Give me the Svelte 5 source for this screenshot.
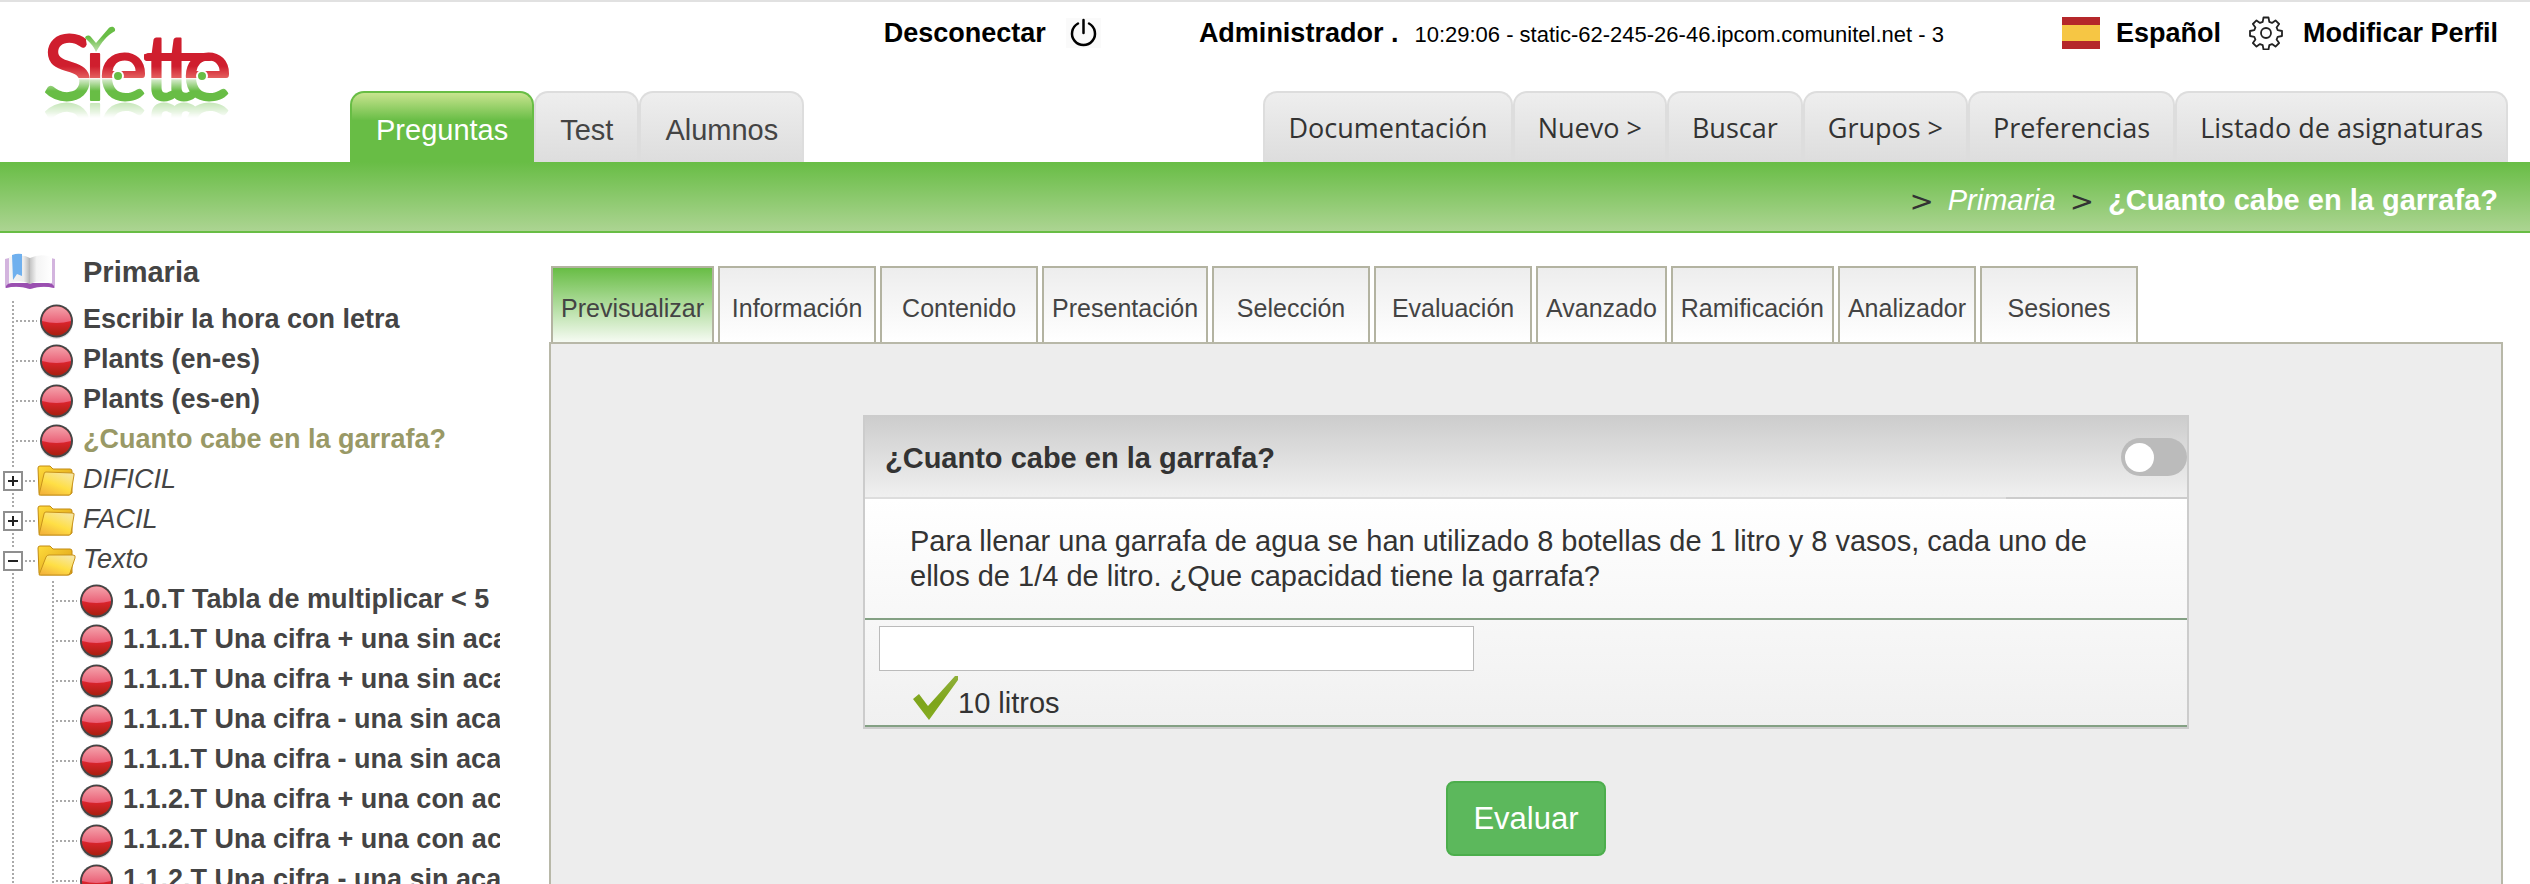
<script>
	const sections = [
		{ name: 'Preguntas', active: true },
		{ name: 'Test', active: false },
		{ name: 'Alumnos', active: false }
	];

	const tools = [
		'Documentación',
		'Nuevo >',
		'Buscar',
		'Grupos >',
		'Preferencias',
		'Listado de asignaturas'
	];

	const views = [
		'Previsualizar',
		'Información',
		'Contenido',
		'Presentación',
		'Selección',
		'Evaluación',
		'Avanzado',
		'Ramificación',
		'Analizador',
		'Sesiones'
	];

	// rows of the tree; folders carry an items list
	let tree = $state([
		{ name: 'Escribir la hora con letra' },
		{ name: 'Plants (en-es)' },
		{ name: 'Plants (es-en)' },
		{ name: '¿Cuanto cabe en la garrafa?', current: true },
		{ name: 'DIFICIL', open: false, items: [] },
		{ name: 'FACIL', open: false, items: [] },
		{
			name: 'Texto',
			open: true,
			items: [
				{ name: '1.0.T Tabla de multiplicar < 5' },
				{ name: '1.1.1.T Una cifra + una sin aca' },
				{ name: '1.1.1.T Una cifra + una sin aca' },
				{ name: '1.1.1.T Una cifra - una sin aca' },
				{ name: '1.1.1.T Una cifra - una sin aca' },
				{ name: '1.1.2.T Una cifra + una con ac' },
				{ name: '1.1.2.T Una cifra + una con ac' },
				{ name: '1.1.2.T Una cifra - una sin aca' }
			]
		}
	]);

	let view = $state('Previsualizar');
	let answer = $state('');
	let showAnswer = $state(false);
</script>

{#snippet ball()}
	<svg class="ball" width="37" height="38" viewBox="0 0 37 38" aria-hidden="true">
		<ellipse cx="18" cy="22" rx="16" ry="15" fill="#000" opacity="0.12" />
		<circle cx="18" cy="19" r="16.500" fill="#454545" />
		<circle cx="18" cy="19" r="14.500" fill="url(#ballLow)" />
		<path d="M3.500 19a14.500 14.500 0 0 1 29 0q-14.500 4-29 0z" fill="url(#ballTop)" />
	</svg>
{/snippet}

{#snippet leaf(item)}
	<li>
		<div class="row">
			<span class="dots"></span>
			{@render ball()}
			<a href="#item" class="question" class:current={item.current}>{item.name}</a>
		</div>
	</li>
{/snippet}

<svg class="defs" width="0" height="0" aria-hidden="true">
	<defs>
		<linearGradient id="ballTop" x1="0" y1="0" x2="0" y2="1">
			<stop offset="0" stop-color="#f4a3ab" />
			<stop offset="1" stop-color="#ea5f76" />
		</linearGradient>
		<linearGradient id="ballLow" x1="0" y1="0" x2="0" y2="1">
			<stop offset="0.5" stop-color="#e0242f" />
			<stop offset="1" stop-color="#a8200f" />
		</linearGradient>
		<linearGradient id="folderBack" x1="0" y1="0" x2="1" y2="1">
			<stop offset="0" stop-color="#ffdc3c" />
			<stop offset="1" stop-color="#d99a12" />
		</linearGradient>
		<linearGradient id="folderFront" x1="0.2" y1="1" x2="0.8" y2="0">
			<stop offset="0" stop-color="#f3b43c" />
			<stop offset="0.45" stop-color="#ffdf45" />
			<stop offset="1" stop-color="#f6e7a8" />
		</linearGradient>
		<linearGradient id="pageLeft">
			<stop offset="0" stop-color="#f6f6f6" />
			<stop offset="0.7" stop-color="#ececec" />
			<stop offset="1" stop-color="#b4b4b4" />
		</linearGradient>
		<linearGradient id="pageRight">
			<stop offset="0" stop-color="#c4c4c4" />
			<stop offset="0.3" stop-color="#f4f4f4" />
			<stop offset="1" stop-color="#fff" />
		</linearGradient>
	</defs>
</svg>

<div class="page">
	<header>
		<a href="#home" class="logo" aria-label="Siette">
			<svg width="210" height="90" viewBox="0 0 210 90">
				<defs>
					<linearGradient id="ink" gradientUnits="userSpaceOnUse" x1="0" y1="23" x2="0" y2="88">
						<stop offset="0" stop-color="#cf1e2e" />
						<stop offset="0.48" stop-color="#cf1e2e" />
						<stop offset="0.66" stop-color="#e4605f" />
						<stop offset="0.67" stop-color="#fff" />
						<stop offset="0.69" stop-color="#d3e9c8" />
						<stop offset="0.86" stop-color="#68bd45" />
						<stop offset="1" stop-color="#68bd45" />
					</linearGradient>
					<linearGradient id="tick" x1="0" y1="0" x2="0" y2="1">
						<stop offset="0.4" stop-color="#68bd45" />
						<stop offset="1" stop-color="#c3e2b2" />
					</linearGradient>
				</defs>
				<text x="9 50 65 109 129 149" y="88" class="wordmark">Siette</text>
				<ellipse cx="61" cy="28" rx="9" ry="11" fill="#fff" />
				<path d="M115 45h60" stroke="#cf1e2e" stroke-width="8" stroke-linecap="round" />
				<path
					d="M51 26c1-3 4-3 6-1l5 6 12-14c3-4 8-2 7 2-9 5-13 11-19 21-3-7-6-9-11-14z"
					fill="url(#tick)"
				/>
				<circle cx="84" cy="64" r="5" fill="#68bd45" stroke="#fff" stroke-width="2" />
				<circle cx="168" cy="64" r="5" fill="#68bd45" stroke="#fff" stroke-width="2" />
			</svg>
		</a>

		<div class="session">
			<a href="#logout" class="logout">
				Desconectar
				<svg width="35" height="30" viewBox="0 0 35 30" aria-hidden="true">
					<path
						d="M17.500 2v13M12 5.500a11.500 11.500 0 1 0 11 0"
						fill="none"
						stroke="#000"
						stroke-width="2.500"
						stroke-linecap="round"
					/>
				</svg>
			</a>
			<div class="user">
				<strong>Administrador .</strong>
				<span class="host">10:29:06 - static-62-245-26-46.ipcom.comunitel.net - 3</span>
			</div>
			<a href="#language" class="language">
				<span class="flag"></span>
				Español
			</a>
			<a href="#profile" class="profile">
				<svg width="34" height="34" viewBox="0 0 34 34" aria-hidden="true">
					<g fill="none" stroke="#222" stroke-width="1.800" stroke-linejoin="round">
						<path
							d="M14.500 1.500h5l.8 4.300 2.700 1.100 3.500-2.500 3.600 3.600-2.500 3.500 1.100 2.700 4.300.8v5l-4.300.8-1.100 2.700 2.500 3.500-3.600 3.600-3.500-2.500-2.700 1.100-.8 4.300h-5l-.8-4.300-2.700-1.100-3.500 2.500-3.600-3.600 2.500-3.500-1.100-2.700-4.300-.8v-5l4.300-.8 1.100-2.700-2.500-3.500 3.600-3.600 3.500 2.500 2.700-1.100z"
						/>
						<circle cx="17" cy="17" r="5" />
					</g>
				</svg>
				Modificar Perfil
			</a>
		</div>

		<div class="menus">
			<nav class="menu sections">
				{#each sections as section}
					<a href="#section" class:active={section.active}>{section.name}</a>
				{/each}
			</nav>
			<nav class="menu tools">
				{#each tools as tool}
					<a href="#tool">{tool}</a>
				{/each}
			</nav>
		</div>
	</header>

	<nav class="breadcrumb">
		<span class="sep">&gt;</span>
		<a href="#subject"><em>Primaria</em></a>
		<span class="sep">&gt;</span>
		<strong>¿Cuanto cabe en la garrafa?</strong>
	</nav>

	<div class="content">
		<aside>
			<a href="#subject" class="subject">
				<svg width="54" height="38" viewBox="0 0 54 38" aria-hidden="true">
					<path d="M2 6l4-1v27h42V5l4 1v29q-12-3-25 1-13-4-25-1z" fill="#d3b4de" />
					<path d="M3 33q2-3 6-3h36q4 0 6 3v2q-12-3-24 1-12-4-24-1z" fill="#9a4fb0" />
					<path d="M6 4q13-4 21 1v26q-9-5-21-1z" fill="url(#pageLeft)" />
					<path d="M27 5q10-5 22-1v26q-13-4-22 1z" fill="url(#pageRight)" />
					<path d="M9 2q5-2 10-1v22l-5-2-4 6z" fill="#6fb0ee" />
				</svg>
				Primaria
			</a>
			<ul class="tree">
				{#each tree as item}
					{#if item.items}
						<li>
							<div class="row">
								<button
									class="expand"
									aria-label={item.name}
									aria-expanded={item.open}
									onclick={() => (item.open = !item.open)}
								>
									<svg width="20" height="20" viewBox="0 0 20 20" aria-hidden="true">
										<rect x="1" y="1" width="18" height="18" fill="#fff" stroke="#8f8f8f" stroke-width="2" />
										<path d={item.open ? 'M5 10h10' : 'M5 10h10M10 5v10'} stroke="#222" stroke-width="2" />
									</svg>
								</button>
								<span class="dots short"></span>
								<svg class="folder" width="40" height="32" viewBox="0 0 40 32" aria-hidden="true">
									<path d="M1 3q0-2 2-2h10l3 3h17q2 0 2 2v22l-3 2H4q-2 0-2-2z" fill="url(#folderBack)" stroke="#c28a10" />
									{#if item.open}
										<path d="M9 12q1-2 3-2h24q3 0 2 3l-5 15q-1 2-3 2H2z" fill="url(#folderFront)" stroke="#c9941c" />
									{:else}
										<path d="M7 9q0-2 2-2l26 1q3 0 2 2l-3 18q0 2-2 2H2z" fill="url(#folderFront)" stroke="#c9941c" />
									{/if}
								</svg>
								<a href="#folder" class="theme">{item.name}</a>
							</div>
							{#if item.open}
								<ul class="branch">
									{#each item.items as child}
										{@render leaf(child)}
									{/each}
								</ul>
							{/if}
						</li>
					{:else}
						{@render leaf(item)}
					{/if}
				{/each}
			</ul>
		</aside>

		<main>
			<div class="views">
				{#each views as name}
					<button class:selected={name === view} onclick={() => (view = name)}>{name}</button>
				{/each}
			</div>

			<div class="panel">
				<form onsubmit={(e) => e.preventDefault()}>
					<section class="card">
						<div class="card-head">
							<h1>¿Cuanto cabe en la garrafa?</h1>
							<input
								type="checkbox"
								class="switch"
								aria-label="Mostrar solución"
								bind:checked={showAnswer}
							/>
						</div>
						<div class="rule"><span></span></div>
						<div class="card-body">
							<p class="stem" id="stem">
								Para llenar una garrafa de agua se han utilizado 8 botellas de 1 litro y 8 vasos, cada
								uno de ellos de 1/4 de litro. ¿Que capacidad tiene la garrafa?
							</p>
							<div class="answer">
								<input type="text" aria-labelledby="stem" bind:value={answer} />
								<div class="solution">
									<svg width="46" height="44" viewBox="0 0 46 44" aria-hidden="true">
										<defs>
											<linearGradient id="check" x1="0" y1="0" x2="0" y2="1">
												<stop offset="0" stop-color="#8fb03a" />
												<stop offset="0.6" stop-color="#7ea51a" />
												<stop offset="1" stop-color="#86ad22" />
											</linearGradient>
										</defs>
										<path d="M1 23l6-5 9 12L43 0h3v4L17 44z" fill="url(#check)" />
									</svg>
									10 litros
								</div>
							</div>
						</div>
					</section>
					<button type="submit" class="submit">Evaluar</button>
				</form>
			</div>
		</main>
	</div>
</div>

<style>
	:global(body) {
		margin: 0;
	}

	.page {
		display: flex;
		flex-direction: column;
		height: 100vh;
		overflow: hidden;
		background: #fff;
		color: #444;
		font-family: Helvetica, 'Liberation Sans', Arial, sans-serif;
		font-size: 27px;
	}

	a {
		color: inherit;
		text-decoration: none;
	}

	button,
	input {
		font-family: inherit;
	}

	.defs {
		position: absolute;
	}

	/* header */

	header {
		display: grid;
		grid-template-columns: 350px 1fr;
		grid-template-rows: 89px 71px;
		border-top: 2px solid #e1e1e1;
		flex: none;
	}

	.logo {
		grid-row: 1 / 3;
		padding: 10px 0 0 34px;
	}

	.logo svg {
		display: block;
		overflow: visible;
		-webkit-box-reflect: below 0 linear-gradient(transparent 82%, rgba(0, 0, 0, 0.4));
	}

	.wordmark {
		font-family: Lato, sans-serif;
		font-size: 92px;
		fill: url(#ink);
		stroke: url(#ink);
		stroke-width: 2px;
		stroke-linejoin: round;
	}

	.session {
		display: flex;
		justify-content: flex-end;
		align-items: center;
		height: 62px;
		padding-right: 32px;
		color: #000;
		font-weight: 700;
		white-space: nowrap;
	}

	.session a,
	.user {
		display: flex;
		align-items: center;
		gap: 20px;
	}

	.session .language,
	.user {
		gap: 16px;
	}

	.logout svg {
		background: #fafafa;
	}

	.user {
		align-items: baseline;
		margin: 0 118px 0 98px;
	}

	.host {
		font-size: 22px;
		font-weight: 400;
	}

	.flag {
		width: 38px;
		height: 32px;
		background: linear-gradient(#b5272a 25%, #f6c644 25% 75%, #b5272a 75%);
	}

	.profile {
		margin-left: 28px;
	}

	.menus {
		display: flex;
		justify-content: space-between;
		padding-right: 22px;
	}

	.menu {
		display: flex;
	}

	.menu a {
		display: flex;
		align-items: center;
		box-sizing: border-box;
		padding: 6px 24px 0;
		border: 2px solid #ddd;
		border-bottom: 0;
		border-radius: 14px 14px 0 0;
		background: linear-gradient(#eee, #ddd);
		font-size: 29px;
		white-space: nowrap;
	}

	.menu a.active {
		border-color: #68bd45;
		background: linear-gradient(#c8e48f, #68bd45 40%);
		color: #fff;
	}

	.menu.tools a {
		padding: 0 23px;
		color: #333;
		font-family: 'Trebuchet MS', 'Open Sans', sans-serif;
		font-size: 27px;
	}

	.breadcrumb {
		display: flex;
		justify-content: flex-end;
		align-items: center;
		gap: 14px;
		flex: none;
		box-sizing: border-box;
		height: 71px;
		padding: 8px 32px 0 0;
		border-bottom: 2px solid #68bd45;
		background: linear-gradient(#68bd45, #acd492);
		color: #fff;
		font-size: 29px;
	}

	.sep {
		color: #333;
		font-family: 'DejaVu Sans', sans-serif;
	}

	/* tree */

	.content {
		display: flex;
		flex: 1;
		min-height: 0;
	}

	aside {
		flex: none;
		width: 500px;
		overflow: hidden;
		font-weight: 700;
	}

	.subject {
		display: flex;
		align-items: center;
		gap: 26px;
		height: 68px;
		padding: 10px 0 0 3px;
		box-sizing: border-box;
		font-size: 29px;
	}

	.subject svg {
		flex: none;
	}

	ul {
		margin: 0;
		padding: 0;
		list-style: none;
		background: repeating-linear-gradient(#aaa 0 2px, transparent 2px 4px) 12px 0 / 2px 100% no-repeat;
	}

	.tree {
		min-height: 100%;
	}

	.branch {
		margin-left: 40px;
	}

	.row {
		display: flex;
		align-items: center;
		height: 40px;
		white-space: nowrap;
	}

	.dots {
		flex: none;
		width: 21px;
		height: 2px;
		margin-left: 16px;
		background: repeating-linear-gradient(90deg, #aaa 0 2px, transparent 2px 4px);
	}

	.dots.short {
		width: 12px;
		margin-left: 2px;
	}

	.expand {
		display: flex;
		margin-left: 1px;
		padding: 2px 0 2px 2px;
		border: 0;
		background: #fff;
		cursor: pointer;
	}

	.ball,
	.folder {
		flex: none;
		width: 40px;
		margin-right: 6px;
	}

	.row a {
		padding-bottom: 4px;
	}

	.theme {
		font-style: italic;
		font-weight: 400;
	}

	.current {
		color: #999966;
	}

	/* main */

	main {
		display: flex;
		flex-direction: column;
		flex: 1;
		margin: 33px 27px 0 49px;
	}

	.views {
		display: flex;
		gap: 4px;
		padding-left: 2px;
	}

	.views button {
		min-width: 158px;
		height: 76px;
		padding: 6px 8px 0;
		border: 2px solid #b3b3a1;
		border-bottom: 0;
		background: linear-gradient(#ededed, #fff);
		color: #444;
		font-size: 25px;
		cursor: pointer;
	}

	.views button:nth-child(7),
	.views button:nth-child(9) {
		min-width: 0;
	}

	.views button.selected {
		background: linear-gradient(#68bd45, #f6fbf3);
	}

	.panel {
		flex: 1;
		padding-top: 71px;
		border: 2px solid #b8b8a8;
		border-bottom: 0;
		background: #ededed;
	}

	form {
		display: flex;
		flex-direction: column;
		align-items: center;
		gap: 52px;
	}

	.card {
		box-sizing: border-box;
		width: 68%;
		border: 2px solid #ccc;
		border-top: 0;
		color: #333;
		font-size: 29px;
	}

	.card-head {
		display: flex;
		justify-content: space-between;
		align-items: center;
		height: 82px;
		padding-left: 20px;
		background: linear-gradient(#ccc, #f0f0f0);
	}

	h1 {
		margin: 4px 0 0;
		font-size: 29px;
	}

	.switch {
		display: flex;
		align-items: center;
		box-sizing: border-box;
		width: 66px;
		height: 38px;
		margin: 2px 0 0;
		padding: 0 4px;
		border-radius: 19px;
		background: #bbb;
		appearance: none;
		cursor: pointer;
	}

	.switch::before {
		content: '';
		width: 29px;
		height: 29px;
		border-radius: 50%;
		background: #fff;
	}

	.switch:checked {
		justify-content: flex-end;
		background: #68bd45;
	}

	.rule {
		height: 2px;
		background: #ddd;
	}

	.rule span {
		display: block;
		width: 181px;
		height: 2px;
		margin-left: auto;
		background: #ccc;
	}

	.card-body {
		background: linear-gradient(#fff, #f0f0f0);
	}

	.stem {
		margin: 0;
		padding: 25px 90px 24px 45px;
		border-bottom: 2px solid #83a083;
		line-height: 35px;
	}

	.answer {
		padding: 6px 14px 5px;
		border-bottom: 2px solid #83a083;
	}

	.answer input {
		display: block;
		box-sizing: border-box;
		width: 46%;
		height: 45px;
		padding: 4px 8px;
		border: 1px solid #bbb;
		font-size: 27px;
	}

	.solution {
		display: flex;
		align-items: flex-end;
		height: 49px;
		padding-left: 33px;
	}

	.submit {
		height: 75px;
		padding: 0 25px;
		border: 2px solid #4cae4c;
		border-radius: 8px;
		background: #5cb85c;
		color: #fff;
		font-size: 31px;
		cursor: pointer;
	}
</style>
